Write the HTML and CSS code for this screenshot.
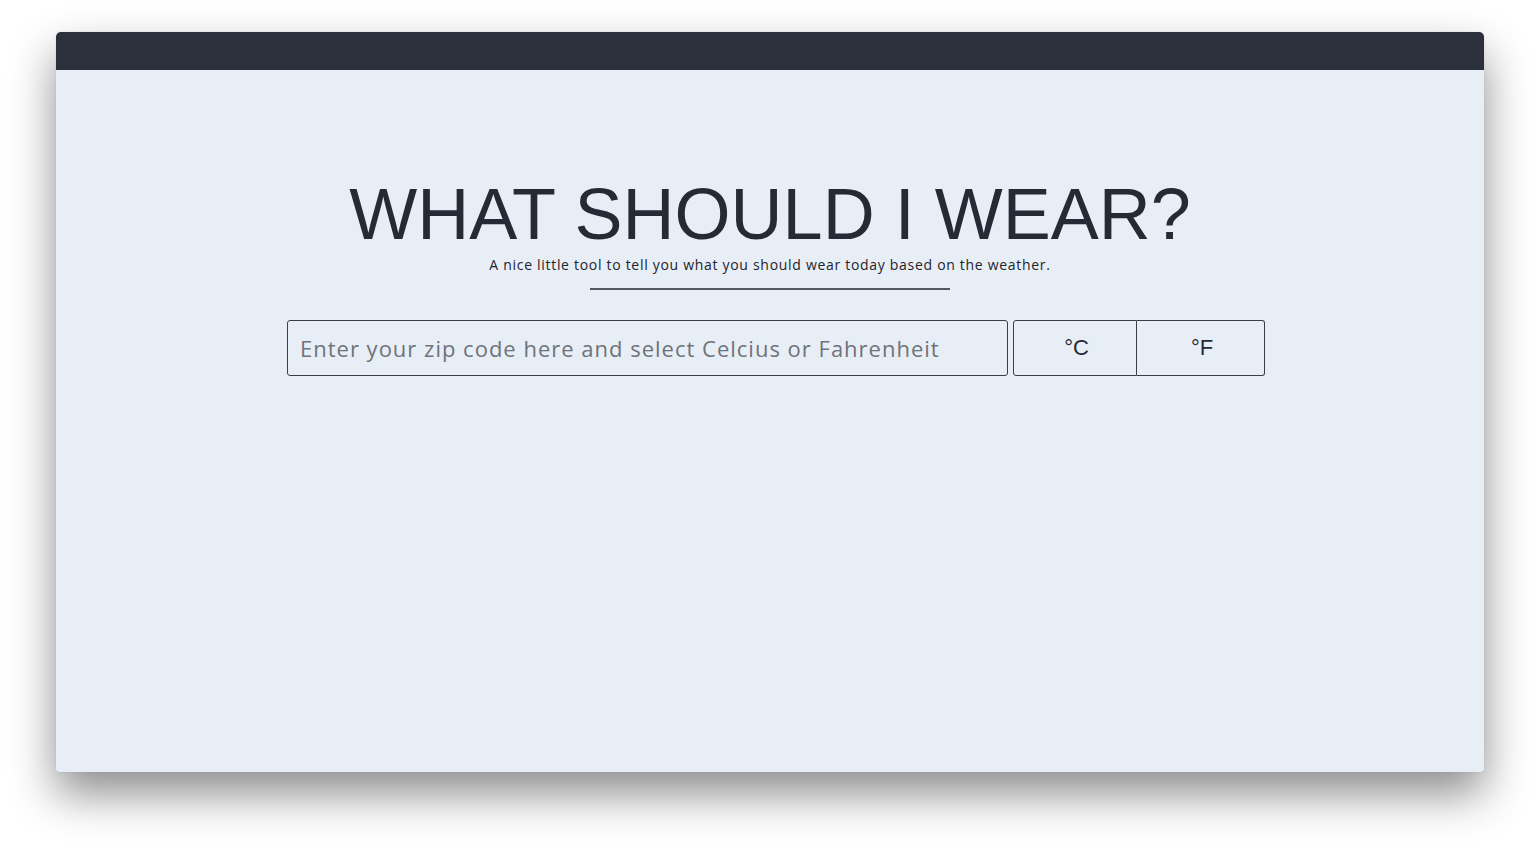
FILE: index.html
```html
<!DOCTYPE html>
<html lang="en">
<head>
<meta charset="utf-8">
<title>What Should I Wear?</title>
<link rel="stylesheet" href="styles.css">
</head>
<body>
<div class="window">
  <div class="topbar"></div>
  <main class="content">
    <h1 class="title">WHAT SHOULD I WEAR?</h1>
    <p class="subtitle">A nice little tool to tell you what you should wear today based on the weather.</p>
    <hr class="rule">
    <form class="search">
      <input class="zip" type="text" placeholder="Enter your zip code here and select Celcius or Fahrenheit">
      <div class="units">
        <button type="button" class="unit unit-c">°C</button>
        <button type="button" class="unit unit-f">°F</button>
      </div>
    </form>
  </main>
</div>
</body>
</html>
```
FILE: styles.css
```css
html, body {
  margin: 0;
  padding: 0;
  background: #ffffff;
}
body {
  padding: 32px 56px 80px;
  height: 852px;
  box-sizing: border-box;
  overflow: hidden;
}
.window {
  width: 1428px;
  height: 740px;
  display: flex;
  flex-direction: column;
  border-radius: 5px 5px 3px 3px;
  overflow: hidden;
  background: #e8eef5;
  box-shadow: 0 22px 45px rgba(0, 0, 0, 0.45), 0 0 1px rgba(0, 0, 0, 0.3);
}
.topbar {
  height: 38px;
  background: #2c303b;
  flex: none;
}
.content {
  flex: 1;
  display: flex;
  flex-direction: column;
  align-items: center;
  padding-top: 108px;
}
.title {
  margin: 0;
  font-family: "Liberation Sans", Arial, sans-serif;
  font-weight: 400;
  font-size: 72px;
  line-height: 72px;
  color: #262a35;
}
.subtitle {
  margin: 6px 0 0;
  font-family: "Open Sans", sans-serif;
  font-size: 14px;
  line-height: 18px;
  letter-spacing: 0.7px;
  color: #1f232c;
}
.rule {
  width: 360px;
  height: 2px;
  margin: 14px 0 0;
  border: 0;
  background: #55585e;
}
.search {
  margin-top: 30px;
  width: 990px;
  padding-left: 12px;
  box-sizing: border-box;
  display: flex;
  gap: 5px;
}
.zip {
  width: 721px;
  height: 56px;
  box-sizing: border-box;
  border: 1px solid #3a3e48;
  border-radius: 3px;
  background: transparent;
  padding: 0 12px;
  font-family: "Open Sans", sans-serif;
  font-size: 22px;
  letter-spacing: 1px;
  color: #262a35;
  outline: none;
}
.zip::placeholder {
  color: #6f737b;
}
.units {
  display: flex;
}
.unit {
  height: 56px;
  box-sizing: border-box;
  border: 1px solid #3a3e48;
  background: transparent;
  font-family: "Liberation Sans", Arial, sans-serif;
  font-size: 22px;
  color: #262a35;
  cursor: pointer;
  padding: 0 0 0 3px;
}
.unit-c {
  width: 124px;
  border-radius: 3px 0 0 3px;
}
.unit-f {
  width: 128px;
  border-left: 0;
  border-radius: 0 3px 3px 0;
}
```
